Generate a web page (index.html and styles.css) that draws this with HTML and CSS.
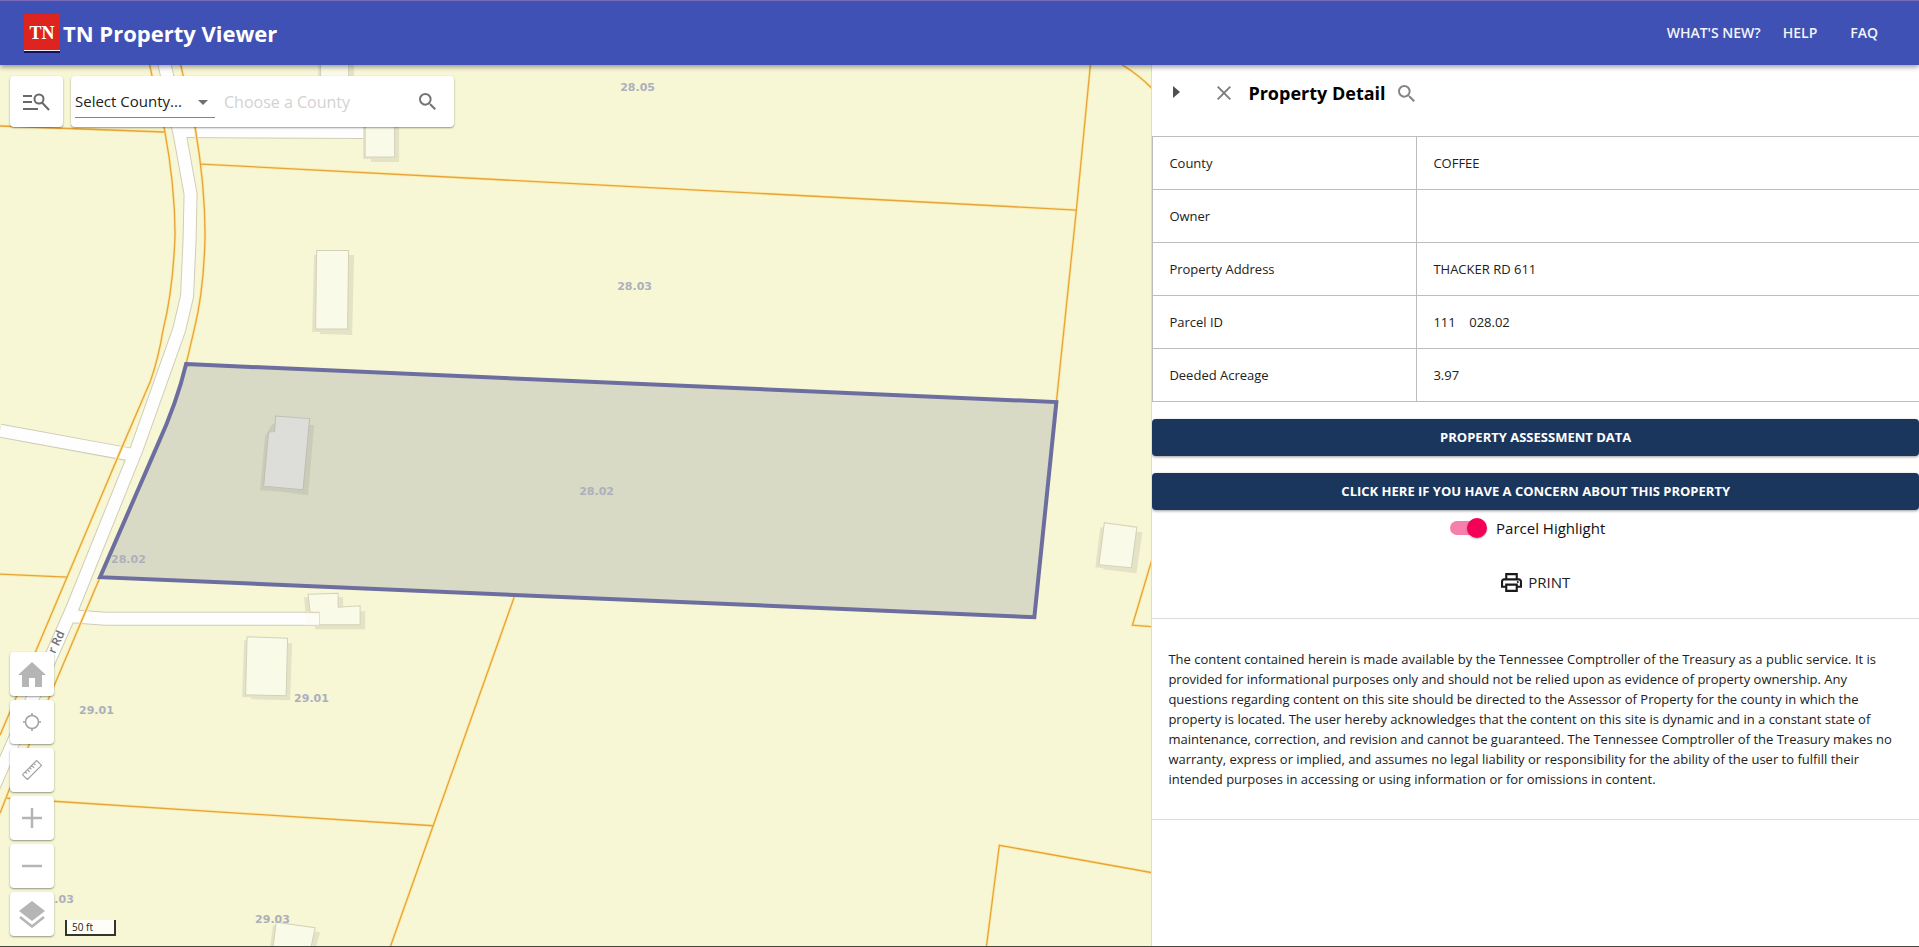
FILE: index.html
```html
<!DOCTYPE html>
<html lang="en">
<head>
<meta charset="utf-8">
<title>TN Property Viewer</title>
<meta name="viewport" content="width=device-width, initial-scale=1">
<link rel="stylesheet" href="styles.css">
</head>
<body>
<header class="topbar">
  <div class="brand">
    <svg class="brand-logo" viewBox="0 0 36 39" aria-hidden="true">
      <rect width="36" height="36" fill="#dd241f"/>
      <rect y="36" width="36" height="1" fill="#f4f0fa"/>
      <rect y="37" width="36" height="2" fill="#14105c"/>
      <text x="18" y="25" text-anchor="middle" class="logo-text">TN</text>
    </svg>
    <h1 class="brand-title">TN Property Viewer</h1>
  </div>
  <nav class="topnav">
    <a class="nav-new" href="#new">WHAT'S NEW?</a>
    <a class="nav-help" href="#help">HELP</a>
    <a href="#faq">FAQ</a>
  </nav>
</header>

<main class="workspace">
  <section class="map" aria-label="Parcel map">
    <svg class="map-canvas" viewBox="0 65 1151 881" preserveAspectRatio="xMinYMin slice">
      <!-- roads and driveways -->
      <g class="road-edge">
        <path d="M180 131 L366 132"/>
        <path d="M0 430.500 L130 454.500"/>
        <path d="M72 616 L105 618.500 L320 618.500"/>
        <path d="M164 62 L180 136 L190.500 194 L189.500 240 L187 296 L179 330 L137 448 L72 609 L0 772 L-10 795"/>
      </g>
      <g class="road-fill">
        <path d="M180 131 L366 132"/>
        <path d="M0 430.500 L134 455"/>
        <path d="M72 616 L105 618.500 L320 618.500"/>
        <path d="M164 62 L180 136 L190.500 194 L189.500 240 L187 296 L179 330 L137 448 L72 609 L0 772 L-10 795"/>
      </g>
      <!-- building shadows and footprints -->
      <g class="shadow">
        <path d="M318 60H354V83H318Z"/>
        <path d="M363 120H399V162H371V159H363Z"/>
        <path d="M314 255L354 255L352 335L320 334V332H312Z"/>
        <path d="M304 597H343V611H365V629H315V619H306Z"/>
        <path d="M244 640L292 643L290 700L251 699V697H242Z"/>
        <path d="M273 925L320 932L316 946H270Z"/>
        <path d="M1100 527L1142 532L1136 573L1103 569V568L1095 567Z"/>
      </g>
      <g class="building">
        <path d="M320.500 60H348.500V80H320.500Z"/>
        <path d="M365 120H394.500V157H365Z"/>
        <path d="M316.500 250.500H348.500L347.500 329H315.500Z"/>
        <path d="M308 594L338 593V607L360 605.500V624.500H319V612H310Z"/>
        <path d="M247 636.500L287.500 638L286 695.500L245.500 694.500Z"/>
        <path d="M276 922L315 927.500L311 947H273Z"/>
        <path d="M1104 522.500L1136.500 527L1131 567.500L1098.500 564.500Z"/>
      </g>
      <path class="road-cap" d="M305 613H319V624.500H305Z"/>
      <!-- parcel boundaries: pale halo, then the thin line over it -->
      <g class="line-halo">
        <g id="parcel-lines">
          <path d="M149 62L152 76L164 127Q175 185 175 235Q173 290 163 330Q158 360 150 382L122 447L67 577L37 648L0 735"/>
          <path d="M180 62L195 127Q205 185 205 235Q204 290 194 330L186 364"/>
          <path d="M100 577L70 648L28 747L9 790L0 813"/>
          <path d="M0 126L164 132"/>
          <path d="M201 164L1076 210"/>
          <path d="M1090 65L1076 210L1056 402"/>
          <path d="M1122 65Q1140 76 1153 90"/>
          <path d="M0 574L67 577"/>
          <path d="M7 798L433 825.500"/>
          <path d="M514 597L433 825.500L390 947"/>
          <path d="M986 947L999 845L1152 872.500"/>
          <path d="M1152 558L1132 625L1152 626.500"/>
        </g>
      </g>
      <use href="#parcel-lines" class="line-core"/>
      <!-- selected parcel -->
      <path class="selected" d="M186 364L1056 402L1034 617L100 577L157 446Q177 402 186 364Z"/>
      <path class="selected-shadow" d="M272 424L314 425L308 495L277 491L260 490L265 436Z"/>
      <path class="selected-building" d="M275.500 416L309.500 418.500L303 489.500L263.500 486L268.500 432L274.500 431.500Z"/>
      <g class="map-label">
        <text x="620" y="91">28.05</text>
        <text x="617" y="290">28.03</text>
        <text x="579" y="495">28.02</text>
        <text x="111" y="563">28.02</text>
        <text x="79" y="714">29.01</text>
        <text x="294" y="702">29.01</text>
        <text x="255" y="923">29.03</text>
        <text x="39" y="903">29.03</text>
      </g>
      <text class="road-label" transform="translate(55 654) rotate(-65)">r Rd</text>
    </svg>

    <div class="searchbar">
      <button class="card advanced" type="button" aria-label="Advanced search">
        <svg class="icon-adv" viewBox="0 0 27 18" aria-hidden="true"><g fill="none" stroke="#696969" stroke-width="2"><path d="M0 3H9M0 9H9M0 16H15"/><circle cx="16" cy="6" r="4.500"/><path d="M19 9.500L26 17"/></g></svg>
      </button>
      <form class="card search-form">
        <div class="select-wrap">
          <select class="county-select" aria-label="County"><option>Select County...</option></select>
          <svg class="select-arrow" viewBox="0 0 10 5" aria-hidden="true"><path d="M0 0H10L5 5Z" fill="#707070"/></svg>
        </div>
        <input class="county-input" type="text" placeholder="Choose a County" aria-label="Search text">
        <button class="plain search-go" type="button" aria-label="Search">
          <svg class="icon-search" viewBox="3 3 17.500 17.500" aria-hidden="true"><path fill="#747474" d="M15.500 14h-.79l-.28-.27A6.470 6.470 0 0 0 16 9.500 6.500 6.500 0 1 0 9.500 16c1.610 0 3.090-.59 4.230-1.570l.27.28v.79l5 4.990L20.490 19l-4.990-5zm-6 0C7.010 14 5 11.990 5 9.500S7.010 5 9.500 5 14 7.010 14 9.500 11.990 14 9.500 14z"/></svg>
        </button>
      </form>
    </div>

    <div class="tools">
      <button class="card tool" type="button" aria-label="Home"><svg class="icon-28" viewBox="0 0 28 25"><path fill="#b5b5b5" d="M14 0L28 13H24V25H17V16H11V25H4V13H0Z"/></svg></button>
      <button class="card tool" type="button" aria-label="My location"><svg class="icon-18" viewBox="0 0 18 18"><g fill="none" stroke="#a0a0a0" stroke-width="1.500"><circle cx="9" cy="9" r="6.500"/><path d="M9 0V3M9 15V18M0 9H3M15 9H18"/></g></svg></button>
      <button class="card tool" type="button" aria-label="Measure"><svg class="icon-20" viewBox="0 0 20 20"><g transform="rotate(-45 10 10)" fill="none" stroke="#a3a3a3" stroke-width="1.200"><path d="M0 6.500H20V13.500H0Z M4 6.500V9M7 6.500V10M10 6.500V9M13 6.500V10M16 6.500V9"/></g></svg></button>
      <button class="card tool" type="button" aria-label="Zoom in"><svg class="icon-20" viewBox="0 0 20 20"><path d="M10 0V20M0 10H20" stroke="#b5b5b5" stroke-width="2.500"/></svg></button>
      <button class="card tool" type="button" aria-label="Zoom out"><svg class="icon-20" viewBox="0 0 20 20"><path d="M0 10H20" stroke="#b5b5b5" stroke-width="2.500"/></svg></button>
      <button class="card tool" type="button" aria-label="Layers"><svg class="icon-26" viewBox="0 0 26 27"><path fill="#b5b5b5" d="M13 0L26 10L13 20L0 10Z"/><path d="M1 16L13 25.500L25 16" fill="none" stroke="#b5b5b5" stroke-width="2.500"/></svg></button>
    </div>
    <div class="scale">50 ft</div>
  </section>

  <aside class="panel">
    <div class="panel-head">
      <button class="plain collapse" type="button" aria-label="Collapse"><svg class="icon-tri" viewBox="0 0 7 12"><path fill="#4f4f4f" d="M0 0L7 6L0 12Z"/></svg></button>
      <button class="plain close" type="button" aria-label="Close"><svg class="icon-x" viewBox="0 0 14 14"><path d="M.7.7L13.300 13.300M13.300.7L.7 13.300" stroke="#7c7c7c" stroke-width="1.900"/></svg></button>
      <h2 class="panel-title">Property Detail</h2>
      <button class="plain" type="button" aria-label="Zoom to property"><svg class="icon-search" viewBox="3 3 17.500 17.500"><path fill="#858585" d="M15.500 14h-.79l-.28-.27A6.470 6.470 0 0 0 16 9.500 6.500 6.500 0 1 0 9.500 16c1.610 0 3.090-.59 4.230-1.570l.27.28v.79l5 4.990L20.490 19l-4.990-5zm-6 0C7.010 14 5 11.990 5 9.500S7.010 5 9.500 5 14 7.010 14 9.500 11.990 14 9.500 14z"/></svg></button>
    </div>
    <table class="details">
      <tbody>
        <tr><th scope="row">County</th><td>COFFEE</td></tr>
        <tr><th scope="row">Owner</th><td></td></tr>
        <tr><th scope="row">Property Address</th><td>THACKER RD 611</td></tr>
        <tr><th scope="row">Parcel ID</th><td class="parcel-id">111    028.02</td></tr>
        <tr><th scope="row">Deeded Acreage</th><td>3.97</td></tr>
      </tbody>
    </table>
    <div class="actions">
      <button class="primary" type="button">PROPERTY ASSESSMENT DATA</button>
      <button class="primary" type="button">CLICK HERE IF YOU HAVE A CONCERN ABOUT THIS PROPERTY</button>
    </div>
    <label class="toggle"><input class="switch" type="checkbox" checked>Parcel Highlight</label>
    <button class="plain print" type="button">
      <svg class="icon-print" viewBox="2 3 20 18" aria-hidden="true"><path fill="#1a1a1a" d="M19 8h-1V3H6v5H5c-1.660 0-3 1.340-3 3v6h4v4h12v-4h4v-6c0-1.660-1.340-3-3-3zM8 5h8v3H8V5zm8 12v2H8v-4h8v2zm2-2v-2H6v2H4v-4c0-.55.45-1 1-1h14c.55 0 1 .45 1 1v4h-2z"/><circle cx="18" cy="11.500" r="1" fill="#1a1a1a"/></svg>
      PRINT
    </button>
    <p class="disclaimer">The content contained herein is made available by the Tennessee Comptroller of the Treasury as a public service. It is provided for informational purposes only and should not be relied upon as evidence of property ownership. Any questions regarding content on this site should be directed to the Assessor of Property for the county in which the property is located. The user hereby acknowledges that the content on this site is dynamic and in a constant state of maintenance, correction, and revision and cannot be guaranteed. The Tennessee Comptroller of the Treasury makes no warranty, express or implied, and assumes no legal liability or responsibility for the ability of the user to fulfill their intended purposes in accessing or using information or for omissions in content.</p>
  </aside>
</main>
</body>
</html>
```
FILE: styles.css
```css
*, *::before, *::after { box-sizing: border-box; }

html, body { height: 100%; }

body {
  margin: 0;
  display: flex;
  flex-direction: column;
  font-family: "Open Sans", "Noto Sans", sans-serif;
  font-size: 13px;
  color: #212121;
  background: #fff;
  border-bottom: 1px solid #45463c;
  overflow: hidden;
}

button, input, select { font: inherit; color: inherit; }
button { cursor: pointer; }
svg { display: block; flex: none; }

/* Header */
.topbar {
  flex: none;
  height: 65px;
  display: flex;
  align-items: center;
  justify-content: space-between;
  padding: 0 41px 0 24px;
  background: #3f51b5;
  border-top: 1px solid #7768b8;
  color: #fff;
  position: relative;
  z-index: 2;
  box-shadow: 0 2px 5px rgba(0, 0, 0, 0.4);
}
.brand { display: flex; align-items: center; gap: 3px; }
.brand-logo { width: 36px; height: 39px; }
.logo-text { font: bold 18px "Liberation Serif", serif; fill: #fff; }
.brand-title { margin: 0; font-size: 22px; font-weight: 700; line-height: 32px; }
.topnav { display: flex; font-size: 14px; font-weight: 600; line-height: 20px; }
.topnav a { color: #f3f4fc; text-decoration: none; }
.nav-new { margin-right: 22px; }
.nav-help { margin-right: 33px; }

/* Layout */
.workspace { flex: 1; min-height: 0; display: grid; grid-template-columns: 3fr 2fr; }
.map { position: relative; overflow: hidden; background: #f7f6d5; min-width: 0; }
.map-canvas { position: absolute; inset: 0; width: 100%; height: 100%; }

.road-edge path { fill: none; stroke: #cfcdb8; stroke-width: 14; }
.road-fill path { fill: none; stroke: #fefefe; stroke-width: 12; }
.road-cap { fill: #fdfdf6; }
.shadow path { fill: #e4e3c6; }
.building path { fill: #fafae8; stroke: #d3d2b8; stroke-width: 1; }
.line-halo { fill: none; stroke: #fdeaa9; stroke-width: 3; }
.line-core { fill: none; stroke: #e5a538; stroke-width: 1.3; }
.selected { fill: #d9dac5; stroke: #6c6e9f; stroke-width: 4; }
.selected-shadow { fill: #cbccb8; }
.selected-building { fill: #dddeda; stroke: #bebfb2; stroke-width: 1; }
.map-label { font: bold 11px "DejaVu Sans", sans-serif; fill: #abb0bc; }
.road-label { font: 600 12px "Open Sans", sans-serif; fill: #6e6e6e; }

/* Map controls */
.card {
  background: #fff;
  border: 0;
  border-radius: 4px;
  box-shadow: 0 1px 2px rgba(0, 0, 0, 0.4);
}
.searchbar { position: absolute; top: 11px; left: 10px; display: flex; gap: 8px; }
.advanced { width: 53px; height: 51px; padding: 0; display: grid; place-items: center; }
.icon-adv { width: 27px; height: 18px; }
.search-form { display: flex; align-items: center; width: 383px; height: 51px; padding: 0 18px 0 4px; }
.select-wrap { position: relative; width: 140px; }
.county-select {
  appearance: none;
  display: block;
  width: 100%;
  height: 33px;
  padding: 0;
  border: 0;
  border-bottom: 1px solid #858585;
  border-radius: 0;
  background: transparent;
  font-size: 15px;
}
.select-arrow { position: absolute; right: 7px; top: 15px; width: 10px; height: 5px; pointer-events: none; }
.county-input {
  flex: 1;
  min-width: 0;
  border: 0;
  padding: 0;
  margin-left: 9px;
  font-size: 16px;
  background: transparent;
  outline: 0;
}
.county-input::placeholder { color: #d2d2d2; opacity: 1; }
.plain { display: flex; align-items: center; padding: 0; border: 0; background: transparent; }
.icon-search { width: 17px; height: 17px; }

.tools { position: absolute; left: 10px; bottom: 10px; display: flex; flex-direction: column; gap: 4px; }
.tool { width: 44px; height: 44px; padding: 0; display: grid; place-items: center; }
.icon-28 { width: 28px; height: 25px; }
.icon-26 { width: 26px; height: 27px; }
.icon-20 { width: 20px; height: 20px; }
.icon-18 { width: 18px; height: 18px; }
.scale {
  position: absolute;
  left: 65px;
  bottom: 10px;
  width: 51px;
  height: 16px;
  padding-left: 5px;
  border: 2px solid #34352c;
  border-top: 0;
  background: rgba(255, 255, 255, 0.8);
  font-size: 10px;
  line-height: 14px;
}

/* Detail panel */
.panel { min-width: 0; border-left: 1px solid #dcdcd0; background: #fff; overflow: auto; }
.panel-head { display: flex; align-items: center; height: 71px; padding: 0 20px 15px; }
.collapse { margin: 0 37px 2px 1px; }
.icon-tri { width: 7px; height: 12px; }
.close { margin-right: 17px; }
.icon-x { width: 14px; height: 14px; }
.panel-title { margin: 0 12px 0 0; font-size: 18px; font-weight: 700; line-height: 24px; color: #000; }

.details { width: 100%; border-collapse: collapse; table-layout: fixed; }
.details th, .details td {
  height: 53px;
  padding: 0 16px;
  border: 1px solid #bdbdbd;
  text-align: left;
  font-weight: 400;
  line-height: 20px;
}
.details td { border-right: 0; }
.details th { width: 264px; }
.parcel-id { white-space: pre; }

.actions { display: flex; flex-direction: column; gap: 17px; padding-top: 17px; }
.primary {
  height: 37px;
  padding: 0 0 2px;
  border: 0;
  border-radius: 4px;
  background: #1b365d;
  color: #fff;
  font-weight: 700;
  box-shadow: 0 1px 3px rgba(0, 0, 0, 0.4);
}
.toggle { display: flex; align-items: center; justify-content: center; gap: 12px; height: 36px; padding-right: 16px; font-size: 15px; color: #111; }
.switch { appearance: none; width: 34px; height: 14px; margin: 0; border-radius: 7px; background: #f780aa; display: flex; align-items: center; justify-content: flex-end; }
.switch::before { content: ""; width: 20px; height: 20px; margin-right: -3px; flex: none; border-radius: 50%; background: #f50057; box-shadow: 0 1px 2px rgba(0, 0, 0, 0.3); }
.print { margin: 0 auto; height: 72px; gap: 6px; font-size: 15px; }
.icon-print { width: 21px; height: 19px; }
.disclaimer { margin: 0; padding: 30px 16px; border: 1px solid #dcdcdc; border-width: 1px 0; line-height: 20px; }
```
